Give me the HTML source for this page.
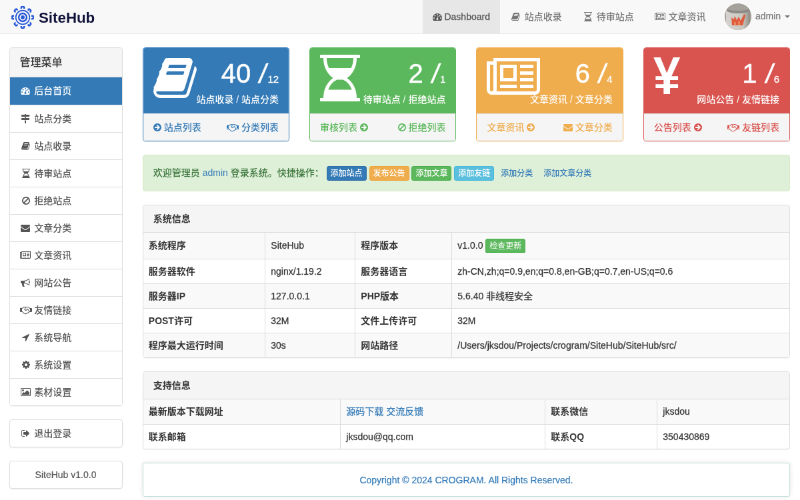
<!DOCTYPE html>
<html lang="zh-CN"><head><meta charset="utf-8"><title>SiteHub</title><style>
*{box-sizing:border-box}
html,body{margin:0;padding:0;background:#fff;overflow:hidden}
body{width:800px;height:500px;position:relative}
#pg{position:absolute;left:0;top:0;width:1200px;height:750px;transform:scale(0.666667);transform-origin:0 0;font-family:"Liberation Sans","Noto Sans CJK SC",sans-serif;font-size:14px;font-weight:500;line-height:20px;color:#333;overflow:hidden;will-change:transform}
a{color:#337ab7;text-decoration:none}
.fa{display:inline-block;height:1em;vertical-align:-0.143em;fill:currentColor;overflow:visible}
.fw{display:inline-block;width:1.2857em;text-align:center}
.navbar{position:absolute;left:0;top:0;width:1200px;height:51px;background:#f8f8f8;border-bottom:1px solid #e7e7e7}
.brand{position:absolute;left:15px;top:0;height:50px}
.brand svg{position:absolute;left:1.8px;top:8.8px;width:34px;height:34px}
.brand span{position:absolute;left:43px;top:0;line-height:54.5px;font-size:22.3px;font-weight:bold;color:#10133a;letter-spacing:0}
.nav{position:absolute;right:0;top:0;height:50px;display:flex;margin:0;padding:0;list-style:none}
.nav li{height:50px;padding:15px 15px;line-height:20px;color:#777;white-space:nowrap}
.nav li.act{background:#e7e7e7;color:#555;-webkit-text-stroke:0.25px currentColor}
.foot,.vs,.nav li.user{-webkit-text-stroke:0.2px currentColor}
.nav li.user{padding:5px 15px 5px 13.5px;}
.avatar{display:inline-block;width:40px;height:40px;border-radius:50%;vertical-align:middle;overflow:hidden;margin-right:2px}
.caret{display:inline-block;width:0;height:0;margin-left:2px;vertical-align:middle;border-top:4px solid;border-right:4px solid transparent;border-left:4px solid transparent}
.side{position:absolute;left:13.5px;top:71px;width:170px}
.main{position:absolute;left:213.8px;top:71px;width:971.2px}
.panel{background:#fff;border:1px solid #ddd;border-radius:4px;margin-bottom:20px;box-shadow:0 1px 1px rgba(0,0,0,.05)}
.ph{padding:10px 15px;background:#f5f5f5;border-bottom:1px solid #ddd;border-radius:3px 3px 0 0;color:#333}
.side .ph{font-size:16px;height:43.5px;padding:12px 15px;line-height:20px}
.lg{margin:0;padding:0;list-style:none}
.lg li{display:block;padding:10px 15px;height:41px;border-top:1px solid #ddd;color:#555;background:#fff;white-space:nowrap}
.lg li:first-child{border-top:0}
.lg li.act{background:#337ab7;color:#fff;border-color:#337ab7}
.lgb{border:1px solid #ddd;border-radius:4px;margin-bottom:20px;height:42px;padding:10px 15px;color:#555;background:#fff;box-shadow:0 1px 2px rgba(0,0,0,.075)}
.cards{display:flex;margin:0 -15px}
.cards .col{width:25%;padding:0 15px}
.card{border:1px solid;border-radius:4px;margin-bottom:20px;box-shadow:0 1px 1px rgba(0,0,0,.05);background:#fff}
.card .hd{height:98px;padding:10px 15px;color:#fff;position:relative;border-radius:3px 3px 0 0;border-bottom:1px solid}
.card .hd .ic{position:absolute;left:15px;top:10px;font-size:70px;line-height:70px;height:70px}
.card .hd .huge{position:absolute;right:15px;top:10px;font-size:40px;line-height:57px;white-space:nowrap}
.card .hd .huge small{font-size:15px;-webkit-text-stroke:0.3px #fff}
.card .hd .huge{-webkit-text-stroke:0.5px #fff}
.sl{display:inline-block;transform:skewX(-9deg);transform-origin:50% 50%;margin:0 1px 0 2px}
.card .hd .lbl{position:absolute;right:15px;top:67px;white-space:nowrap}
.card .ft{height:41px;padding:10px 15px;background:#f5f5f5;border-top:1px solid #ddd;border-radius:0 0 3px 3px;display:flex;justify-content:space-between;white-space:nowrap}
.yen{position:absolute;left:-1px;top:-3.5px;font-size:80px;line-height:70px;font-weight:bold;display:block;transform:scaleX(0.91);transform-origin:0 0;height:70px}
.c1{border-color:#337ab7}.c1 .hd{background:#337ab7;border-color:#337ab7}.c1 .ft{color:#337ab7}
.c2{border-color:#5cb85c}.c2 .hd{background:#5cb85c;border-color:#5cb85c}.c2 .ft{color:#5cb85c}
.c3{border-color:#f0ad4e}.c3 .hd{background:#f0ad4e;border-color:#f0ad4e}.c3 .ft{color:#f0ad4e}
.c4{border-color:#d9534f}.c4 .hd{background:#d9534f;border-color:#d9534f}.c4 .ft{color:#d9534f}
.alert{height:55px;padding:15px;border:1px solid #d6e9c6;border-radius:4px;background:#dff0d8;color:#3c763d;margin-bottom:20px;white-space:nowrap;line-height:23px}
.btn{display:inline-block;padding:1px 5px;font-size:12px;line-height:18px;border-radius:3px;border:1px solid transparent;color:#fff;vertical-align:middle}
.bp{background:#337ab7;border-color:#2e6da4}.bw{background:#f0ad4e;border-color:#eea236}.bs{background:#5cb85c;border-color:#4cae4c}.bi{background:#5bc0de;border-color:#46b8da}.bl{color:#337ab7}
table{width:100%;border-collapse:collapse;border-spacing:0;table-layout:fixed}
td{-webkit-text-stroke:0.25px currentColor;font-weight:400}
td,th{padding:8px;line-height:20px;height:37px;text-align:left;border:1px solid #ddd;vertical-align:top;white-space:nowrap;overflow:hidden}
tr>*:first-child{border-left:0}tr>*:last-child{border-right:0}
tr:last-child>*{border-bottom:0}
tr:first-child>*{border-top:0}
.st tr:nth-child(odd){background:#f9f9f9}
.st tr:first-child>*{height:38px;padding-top:8.5px}
.label{display:inline-block;padding:2.8px 5.6px 2.8px;font-size:10.5px;font-weight:bold;line-height:10.5px;color:#fff;background:#5cb85c;border-radius:3px;vertical-align:baseline;position:relative;top:-1px}
.foot{margin-top:20px;height:51px;padding:15px;border:1px solid #bfdeda;border-radius:3px;text-align:center;color:#337ab7;box-shadow:0 0 7px rgba(60,60,80,.13);background:#fff}
</style></head><body><div id="pg">
<div class="navbar"><div class="brand"><svg viewBox="0 0 100 100"><g fill="none" stroke="#2758d8" stroke-width="5" stroke-linecap="round"><circle cx="50" cy="50" r="30.5"/><circle cx="50" cy="50" r="17.5" stroke-width="7"/></g><circle cx="50" cy="50" r="8.5" fill="#2758d8"/><g fill="none" stroke="#2758d8" stroke-width="7" stroke-linecap="butt"><path transform="rotate(0 50 50)" d="M43.5 12 V7 a4 4 0 0 1 4 -4 h5 a4 4 0 0 1 4 4 V12"/><path transform="rotate(45 50 50)" d="M43.5 12 V7 a4 4 0 0 1 4 -4 h5 a4 4 0 0 1 4 4 V12"/><path transform="rotate(90 50 50)" d="M43.5 12 V7 a4 4 0 0 1 4 -4 h5 a4 4 0 0 1 4 4 V12"/><path transform="rotate(135 50 50)" d="M43.5 12 V7 a4 4 0 0 1 4 -4 h5 a4 4 0 0 1 4 4 V12"/><path transform="rotate(180 50 50)" d="M43.5 12 V7 a4 4 0 0 1 4 -4 h5 a4 4 0 0 1 4 4 V12"/><path transform="rotate(225 50 50)" d="M43.5 12 V7 a4 4 0 0 1 4 -4 h5 a4 4 0 0 1 4 4 V12"/><path transform="rotate(270 50 50)" d="M43.5 12 V7 a4 4 0 0 1 4 -4 h5 a4 4 0 0 1 4 4 V12"/><path transform="rotate(315 50 50)" d="M43.5 12 V7 a4 4 0 0 1 4 -4 h5 a4 4 0 0 1 4 4 V12"/></g></svg><span>SiteHub</span></div>
<ul class="nav"><li class="act"><svg class="fa " viewBox="0 0 1792 1792" style="width:1.0000em;"><path transform="translate(0,1536) scale(1,-1)" d="M384 384q0 53 -37.5 90.5t-90.5 37.5t-90.5 -37.5t-37.5 -90.5t37.5 -90.5t90.5 -37.5t90.5 37.5t37.5 90.5zM576 832q0 53 -37.5 90.5t-90.5 37.5t-90.5 -37.5t-37.5 -90.5t37.5 -90.5t90.5 -37.5t90.5 37.5t37.5 90.5zM1004 351l101 382q6 26 -7.5 48.5t-38.5 29.5 t-48 -6.5t-30 -39.5l-101 -382q-60 -5 -107 -43.5t-63 -98.5q-20 -77 20 -146t117 -89t146 20t89 117q16 60 -6 117t-72 91zM1664 384q0 53 -37.5 90.5t-90.5 37.5t-90.5 -37.5t-37.5 -90.5t37.5 -90.5t90.5 -37.5t90.5 37.5t37.5 90.5zM1024 1024q0 53 -37.5 90.5 t-90.5 37.5t-90.5 -37.5t-37.5 -90.5t37.5 -90.5t90.5 -37.5t90.5 37.5t37.5 90.5zM1472 832q0 53 -37.5 90.5t-90.5 37.5t-90.5 -37.5t-37.5 -90.5t37.5 -90.5t90.5 -37.5t90.5 37.5t37.5 90.5zM1792 384q0 -261 -141 -483q-19 -29 -54 -29h-1402q-35 0 -54 29 q-141 221 -141 483q0 182 71 348t191 286t286 191t348 71t348 -71t286 -191t191 -286t71 -348z"/></svg> Dashboard</li><li><span class="fw" style=""><svg class="fa " viewBox="0 0 1664 1792" style="width:0.9286em;"><path transform="translate(0,1536) scale(1,-1)" d="M1639 1058q40 -57 18 -129l-275 -906q-19 -64 -76.5 -107.5t-122.5 -43.5h-923q-77 0 -148.5 53.5t-99.5 131.5q-24 67 -2 127q0 4 3 27t4 37q1 8 -3 21.5t-3 19.5q2 11 8 21t16.5 23.5t16.5 23.5q23 38 45 91.5t30 91.5q3 10 0.5 30t-0.5 28q3 11 17 28t17 23 q21 36 42 92t25 90q1 9 -2.5 32t0.5 28q4 13 22 30.5t22 22.5q19 26 42.5 84.5t27.5 96.5q1 8 -3 25.5t-2 26.5q2 8 9 18t18 23t17 21q8 12 16.5 30.5t15 35t16 36t19.5 32t26.5 23.5t36 11.5t47.5 -5.5l-1 -3q38 9 51 9h761q74 0 114 -56t18 -130l-274 -906 q-36 -119 -71.5 -153.5t-128.5 -34.5h-869q-27 0 -38 -15q-11 -16 -1 -43q24 -70 144 -70h923q29 0 56 15.5t35 41.5l300 987q7 22 5 57q38 -15 59 -43zM575 1056q-4 -13 2 -22.5t20 -9.5h608q13 0 25.5 9.5t16.5 22.5l21 64q4 13 -2 22.5t-20 9.5h-608q-13 0 -25.5 -9.5 t-16.5 -22.5zM492 800q-4 -13 2 -22.5t20 -9.5h608q13 0 25.5 9.5t16.5 22.5l21 64q4 13 -2 22.5t-20 9.5h-608q-13 0 -25.5 -9.5t-16.5 -22.5z"/></svg></span> 站点收录</li><li><span class="fw" style=""><svg class="fa " viewBox="0 0 1536 1792" style="width:0.8571em;"><path transform="translate(0,1536) scale(1,-1)" d="M1408 1408q0 -261 -106.5 -461.5t-266.5 -306.5q160 -106 266.5 -306.5t106.5 -461.5h96q14 0 23 -9t9 -23v-64q0 -14 -9 -23t-23 -9h-1472q-14 0 -23 9t-9 23v64q0 14 9 23t23 9h96q0 261 106.5 461.5t266.5 306.5q-160 106 -266.5 306.5t-106.5 461.5h-96q-14 0 -23 9 t-9 23v64q0 14 9 23t23 9h1472q14 0 23 -9t9 -23v-64q0 -14 -9 -23t-23 -9h-96zM1280 1408h-1024q0 -206 85 -384h854q85 178 85 384zM1223 192q-54 141 -145.5 241.5t-194.5 142.5h-230q-103 -42 -194.5 -142.5t-145.5 -241.5h910z"/></svg></span> 待审站点</li><li><span class="fw" style=""><svg class="fa " viewBox="0 0 2048 1792" style="width:1.1429em;"><path transform="translate(0,1536) scale(1,-1)" d="M1024 1024h-384v-384h384v384zM1152 384v-128h-640v128h640zM1152 1152v-640h-640v640h640zM1792 384v-128h-512v128h512zM1792 640v-128h-512v128h512zM1792 896v-128h-512v128h512zM1792 1152v-128h-512v128h512zM256 192v960h-128v-960q0 -26 19 -45t45 -19t45 19 t19 45zM1920 192v1088h-1536v-1088q0 -33 -11 -64h1483q26 0 45 19t19 45zM2048 1408v-1216q0 -80 -56 -136t-136 -56h-1664q-80 0 -136 56t-56 136v1088h256v128h1792z"/></svg></span> 文章资讯</li><li class="user"><svg class="avatar" viewBox="0 0 40 40"><linearGradient id="ag" x1="0" y1="0" x2="1" y2="0"><stop offset="0" stop-color="#d6d3ce"/><stop offset="0.7" stop-color="#cbc8c2"/><stop offset="1" stop-color="#8f8b85"/></linearGradient><rect width="40" height="40" fill="#a39f99"/><path d="M2 10 h36 v30 h-36 z" fill="url(#ag)"/><ellipse cx="20" cy="9.5" rx="18" ry="5.5" fill="#8e8a85"/><ellipse cx="20" cy="7" rx="18" ry="4" fill="#a5a19b"/><path d="M11 33 L10 21 L13.5 24 L15 19 L18 25 L21 20 L24 26 L29 16 L31 18 L27 33 Z" fill="#e05a3c"/><path d="M14 33 v-5 h3 v5 z M20 33 v-6 h3 v6z" fill="#f0a070" opacity=".6"/></svg> admin <b class="caret"></b></li></ul></div>
<div class="side"><div class="panel"><div class="ph">管理菜单</div><ul class="lg"><li class="act"><span class="fw" style=""><svg class="fa " viewBox="0 0 1792 1792" style="width:1.0000em;"><path transform="translate(0,1536) scale(1,-1)" d="M384 384q0 53 -37.5 90.5t-90.5 37.5t-90.5 -37.5t-37.5 -90.5t37.5 -90.5t90.5 -37.5t90.5 37.5t37.5 90.5zM576 832q0 53 -37.5 90.5t-90.5 37.5t-90.5 -37.5t-37.5 -90.5t37.5 -90.5t90.5 -37.5t90.5 37.5t37.5 90.5zM1004 351l101 382q6 26 -7.5 48.5t-38.5 29.5 t-48 -6.5t-30 -39.5l-101 -382q-60 -5 -107 -43.5t-63 -98.5q-20 -77 20 -146t117 -89t146 20t89 117q16 60 -6 117t-72 91zM1664 384q0 53 -37.5 90.5t-90.5 37.5t-90.5 -37.5t-37.5 -90.5t37.5 -90.5t90.5 -37.5t90.5 37.5t37.5 90.5zM1024 1024q0 53 -37.5 90.5 t-90.5 37.5t-90.5 -37.5t-37.5 -90.5t37.5 -90.5t90.5 -37.5t90.5 37.5t37.5 90.5zM1472 832q0 53 -37.5 90.5t-90.5 37.5t-90.5 -37.5t-37.5 -90.5t37.5 -90.5t90.5 -37.5t90.5 37.5t37.5 90.5zM1792 384q0 -261 -141 -483q-19 -29 -54 -29h-1402q-35 0 -54 29 q-141 221 -141 483q0 182 71 348t191 286t286 191t348 71t348 -71t286 -191t191 -286t71 -348z"/></svg></span> 后台首页</li>
<li><span class="fw" style=""><svg class="fa " viewBox="0 0 1792 1792" style="width:1.0000em;"><path transform="translate(0,1536) scale(1,-1)" d="M1745 1239q10 -10 10 -23t-10 -23l-141 -141q-28 -28 -68 -28h-1344q-26 0 -45 19t-19 45v256q0 26 19 45t45 19h576v64q0 26 19 45t45 19h128q26 0 45 -19t19 -45v-64h512q40 0 68 -28zM768 320h256v-512q0 -26 -19 -45t-45 -19h-128q-26 0 -45 19t-19 45v512zM1600 768 q26 0 45 -19t19 -45v-256q0 -26 -19 -45t-45 -19h-1344q-40 0 -68 28l-141 141q-10 10 -10 23t10 23l141 141q28 28 68 28h512v192h256v-192h576z"/></svg></span> 站点分类</li>
<li><span class="fw" style=""><svg class="fa " viewBox="0 0 1664 1792" style="width:0.9286em;"><path transform="translate(0,1536) scale(1,-1)" d="M1639 1058q40 -57 18 -129l-275 -906q-19 -64 -76.5 -107.5t-122.5 -43.5h-923q-77 0 -148.5 53.5t-99.5 131.5q-24 67 -2 127q0 4 3 27t4 37q1 8 -3 21.5t-3 19.5q2 11 8 21t16.5 23.5t16.5 23.5q23 38 45 91.5t30 91.5q3 10 0.5 30t-0.5 28q3 11 17 28t17 23 q21 36 42 92t25 90q1 9 -2.5 32t0.5 28q4 13 22 30.5t22 22.5q19 26 42.5 84.5t27.5 96.5q1 8 -3 25.5t-2 26.5q2 8 9 18t18 23t17 21q8 12 16.5 30.5t15 35t16 36t19.5 32t26.5 23.5t36 11.5t47.5 -5.5l-1 -3q38 9 51 9h761q74 0 114 -56t18 -130l-274 -906 q-36 -119 -71.5 -153.5t-128.5 -34.5h-869q-27 0 -38 -15q-11 -16 -1 -43q24 -70 144 -70h923q29 0 56 15.5t35 41.5l300 987q7 22 5 57q38 -15 59 -43zM575 1056q-4 -13 2 -22.5t20 -9.5h608q13 0 25.5 9.5t16.5 22.5l21 64q4 13 -2 22.5t-20 9.5h-608q-13 0 -25.5 -9.5 t-16.5 -22.5zM492 800q-4 -13 2 -22.5t20 -9.5h608q13 0 25.5 9.5t16.5 22.5l21 64q4 13 -2 22.5t-20 9.5h-608q-13 0 -25.5 -9.5t-16.5 -22.5z"/></svg></span> 站点收录</li>
<li><span class="fw" style=""><svg class="fa " viewBox="0 0 1536 1792" style="width:0.8571em;"><path transform="translate(0,1536) scale(1,-1)" d="M1408 1408q0 -261 -106.5 -461.5t-266.5 -306.5q160 -106 266.5 -306.5t106.5 -461.5h96q14 0 23 -9t9 -23v-64q0 -14 -9 -23t-23 -9h-1472q-14 0 -23 9t-9 23v64q0 14 9 23t23 9h96q0 261 106.5 461.5t266.5 306.5q-160 106 -266.5 306.5t-106.5 461.5h-96q-14 0 -23 9 t-9 23v64q0 14 9 23t23 9h1472q14 0 23 -9t9 -23v-64q0 -14 -9 -23t-23 -9h-96zM1280 1408h-1024q0 -206 85 -384h854q85 178 85 384zM1223 192q-54 141 -145.5 241.5t-194.5 142.5h-230q-103 -42 -194.5 -142.5t-145.5 -241.5h910z"/></svg></span> 待审站点</li>
<li><span class="fw" style=""><svg class="fa " viewBox="0 0 1536 1792" style="width:0.8571em;"><path transform="translate(0,1536) scale(1,-1)" d="M1312 643q0 161 -87 295l-754 -753q137 -89 297 -89q111 0 211.5 43.5t173.5 116.5t116 174.5t43 212.5zM313 344l755 754q-135 91 -300 91q-148 0 -273 -73t-198 -199t-73 -274q0 -162 89 -299zM1536 643q0 -157 -61 -300t-163.5 -246t-245 -164t-298.5 -61t-298.5 61 t-245 164t-163.5 246t-61 300t61 299.5t163.5 245.5t245 164t298.5 61t298.5 -61t245 -164t163.5 -245.5t61 -299.5z"/></svg></span> 拒绝站点</li>
<li><span class="fw" style=""><svg class="fa " viewBox="0 0 1792 1792" style="width:1.0000em;"><path transform="translate(0,1536) scale(1,-1)" d="M1792 826v-794q0 -66 -47 -113t-113 -47h-1472q-66 0 -113 47t-47 113v794q44 -49 101 -87q362 -246 497 -345q57 -42 92.5 -65.5t94.5 -48t110 -24.5h1h1q51 0 110 24.5t94.5 48t92.5 65.5q170 123 498 345q57 39 100 87zM1792 1120q0 -79 -49 -151t-122 -123 q-376 -261 -468 -325q-10 -7 -42.5 -30.5t-54 -38t-52 -32.5t-57.5 -27t-50 -9h-1h-1q-23 0 -50 9t-57.5 27t-52 32.5t-54 38t-42.5 30.5q-91 64 -262 182.5t-205 142.5q-62 42 -117 115.5t-55 136.5q0 78 41.5 130t118.5 52h1472q65 0 112.5 -47t47.5 -113z"/></svg></span> 文章分类</li>
<li><span class="fw" style=""><svg class="fa " viewBox="0 0 2048 1792" style="width:1.1429em;"><path transform="translate(0,1536) scale(1,-1)" d="M1024 1024h-384v-384h384v384zM1152 384v-128h-640v128h640zM1152 1152v-640h-640v640h640zM1792 384v-128h-512v128h512zM1792 640v-128h-512v128h512zM1792 896v-128h-512v128h512zM1792 1152v-128h-512v128h512zM256 192v960h-128v-960q0 -26 19 -45t45 -19t45 19 t19 45zM1920 192v1088h-1536v-1088q0 -33 -11 -64h1483q26 0 45 19t19 45zM2048 1408v-1216q0 -80 -56 -136t-136 -56h-1664q-80 0 -136 56t-56 136v1088h256v128h1792z"/></svg></span> 文章资讯</li>
<li><span class="fw" style=""><svg class="fa " viewBox="0 0 1792 1792" style="width:1.0000em;"><path transform="translate(0,1536) scale(1,-1)" d="M1664 896q53 0 90.5 -37.5t37.5 -90.5t-37.5 -90.5t-90.5 -37.5v-384q0 -52 -38 -90t-90 -38q-417 347 -812 380q-58 -19 -91 -66t-31 -100.5t40 -92.5q-20 -33 -23 -65.5t6 -58t33.5 -55t48 -50t61.5 -50.5q-29 -58 -111.5 -83t-168.5 -11.5t-132 55.5q-7 23 -29.5 87.5 t-32 94.5t-23 89t-15 101t3.5 98.5t22 110.5h-122q-66 0 -113 47t-47 113v192q0 66 47 113t113 47h480q435 0 896 384q52 0 90 -38t38 -90v-384zM1536 292v954q-394 -302 -768 -343v-270q377 -42 768 -341z"/></svg></span> 网站公告</li>
<li><span class="fw" style=""><svg class="fa " viewBox="0 0 2304 1792" style="width:1.2857em;"><path transform="translate(0,1536) scale(1,-1)" d="M192 384q40 0 56 32t0 64t-56 32t-56 -32t0 -64t56 -32zM1665 442q-10 13 -38.5 50t-41.5 54t-38 49t-42.5 53t-40.5 47t-45 49l-125 -140q-83 -94 -208.5 -92t-205.5 98q-57 69 -56.5 158t58.5 157l177 206q-22 11 -51 16.5t-47.5 6t-56.5 -0.5t-49 -1q-92 0 -158 -66 l-158 -158h-155v-544q5 0 21 0.5t22 0t19.5 -2t20.5 -4.5t17.5 -8.5t18.5 -13.5l297 -292q115 -111 227 -111q78 0 125 47q57 -20 112.5 8t72.5 85q74 -6 127 44q20 18 36 45.5t14 50.5q10 -10 43 -10q43 0 77 21t49.5 53t12 71.5t-30.5 73.5zM1824 384h96v512h-93l-157 180 q-66 76 -169 76h-167q-89 0 -146 -67l-209 -243q-28 -33 -28 -75t27 -75q43 -51 110 -52t111 49l193 218q25 23 53.5 21.5t47 -27t8.5 -56.5q16 -19 56 -63t60 -68q29 -36 82.5 -105.5t64.5 -84.5q52 -66 60 -140zM2112 384q40 0 56 32t0 64t-56 32t-56 -32t0 -64t56 -32z M2304 960v-640q0 -26 -19 -45t-45 -19h-434q-27 -65 -82 -106.5t-125 -51.5q-33 -48 -80.5 -81.5t-102.5 -45.5q-42 -53 -104.5 -81.5t-128.5 -24.5q-60 -34 -126 -39.5t-127.5 14t-117 53.5t-103.5 81l-287 282h-358q-26 0 -45 19t-19 45v672q0 26 19 45t45 19h421 q14 14 47 48t47.5 48t44 40t50.5 37.5t51 25.5t62 19.5t68 5.5h117q99 0 181 -56q82 56 181 56h167q35 0 67 -6t56.5 -14.5t51.5 -26.5t44.5 -31t43 -39.5t39 -42t41 -48t41.5 -48.5h355q26 0 45 -19t19 -45z"/></svg></span> 友情链接</li>
<li><span class="fw" style=""><svg class="fa " viewBox="0 0 1408 1792" style="width:0.7857em;"><path transform="translate(0,1536) scale(1,-1)" d="M1401 1187l-640 -1280q-17 -35 -57 -35q-5 0 -15 2q-22 5 -35.5 22.5t-13.5 39.5v576h-576q-22 0 -39.5 13.5t-22.5 35.5t4 42t29 30l1280 640q13 7 29 7q27 0 45 -19q15 -14 18.5 -34.5t-6.5 -39.5z"/></svg></span> 系统导航</li>
<li><span class="fw" style=""><svg class="fa " viewBox="0 0 1536 1792" style="width:0.8571em;"><path transform="translate(0,1536) scale(1,-1)" d="M1024 640q0 106 -75 181t-181 75t-181 -75t-75 -181t75 -181t181 -75t181 75t75 181zM1536 749v-222q0 -12 -8 -23t-20 -13l-185 -28q-19 -54 -39 -91q35 -50 107 -138q10 -12 10 -25t-9 -23q-27 -37 -99 -108t-94 -71q-12 0 -26 9l-138 108q-44 -23 -91 -38 q-16 -136 -29 -186q-7 -28 -36 -28h-222q-14 0 -24.5 8.5t-11.5 21.5l-28 184q-49 16 -90 37l-141 -107q-10 -9 -25 -9q-14 0 -25 11q-126 114 -165 168q-7 10 -7 23q0 12 8 23q15 21 51 66.5t54 70.5q-27 50 -41 99l-183 27q-13 2 -21 12.5t-8 23.5v222q0 12 8 23t19 13 l186 28q14 46 39 92q-40 57 -107 138q-10 12 -10 24q0 10 9 23q26 36 98.5 107.5t94.5 71.5q13 0 26 -10l138 -107q44 23 91 38q16 136 29 186q7 28 36 28h222q14 0 24.5 -8.5t11.5 -21.5l28 -184q49 -16 90 -37l142 107q9 9 24 9q13 0 25 -10q129 -119 165 -170q7 -8 7 -22 q0 -12 -8 -23q-15 -21 -51 -66.5t-54 -70.5q26 -50 41 -98l183 -28q13 -2 21 -12.5t8 -23.5z"/></svg></span> 系统设置</li>
<li><span class="fw" style=""><svg class="fa " viewBox="0 0 1920 1792" style="width:1.0714em;"><path transform="translate(0,1536) scale(1,-1)" d="M640 960q0 -80 -56 -136t-136 -56t-136 56t-56 136t56 136t136 56t136 -56t56 -136zM1664 576v-448h-1408v192l320 320l160 -160l512 512zM1760 1280h-1600q-13 0 -22.5 -9.5t-9.5 -22.5v-1216q0 -13 9.5 -22.5t22.5 -9.5h1600q13 0 22.5 9.5t9.5 22.5v1216 q0 13 -9.5 22.5t-22.5 9.5zM1920 1248v-1216q0 -66 -47 -113t-113 -47h-1600q-66 0 -113 47t-47 113v1216q0 66 47 113t113 47h1600q66 0 113 -47t47 -113z"/></svg></span> 素材设置</li>
</ul></div>
<div class="lgb"><span class="fw" style=""><svg class="fa " viewBox="0 0 1664 1792" style="width:0.9286em;"><path transform="translate(0,1536) scale(1,-1)" d="M640 96q0 -4 1 -20t0.5 -26.5t-3 -23.5t-10 -19.5t-20.5 -6.5h-320q-119 0 -203.5 84.5t-84.5 203.5v704q0 119 84.5 203.5t203.5 84.5h320q13 0 22.5 -9.5t9.5 -22.5q0 -4 1 -20t0.5 -26.5t-3 -23.5t-10 -19.5t-20.5 -6.5h-320q-66 0 -113 -47t-47 -113v-704 q0 -66 47 -113t113 -47h288h11h13t11.5 -1t11.5 -3t8 -5.5t7 -9t2 -13.5zM1568 640q0 -26 -19 -45l-544 -544q-19 -19 -45 -19t-45 19t-19 45v288h-448q-26 0 -45 19t-19 45v384q0 26 19 45t45 19h448v288q0 26 19 45t45 19t45 -19l544 -544q19 -19 19 -45z"/></svg></span> 退出登录</div>
<div class="lgb vs" style="text-align:center">SiteHub v1.0.0</div></div>
<div class="main"><div class="cards"><div class="col"><div class="card c1"><div class="hd"><div class="ic"><svg class="fa " viewBox="0 0 1664 1792" style="width:0.9286em;"><path transform="translate(0,1536) scale(1,-1)" d="M1639 1058q40 -57 18 -129l-275 -906q-19 -64 -76.5 -107.5t-122.5 -43.5h-923q-77 0 -148.5 53.5t-99.5 131.5q-24 67 -2 127q0 4 3 27t4 37q1 8 -3 21.5t-3 19.5q2 11 8 21t16.5 23.5t16.5 23.5q23 38 45 91.5t30 91.5q3 10 0.5 30t-0.5 28q3 11 17 28t17 23 q21 36 42 92t25 90q1 9 -2.5 32t0.5 28q4 13 22 30.5t22 22.5q19 26 42.5 84.5t27.5 96.5q1 8 -3 25.5t-2 26.5q2 8 9 18t18 23t17 21q8 12 16.5 30.5t15 35t16 36t19.5 32t26.5 23.5t36 11.5t47.5 -5.5l-1 -3q38 9 51 9h761q74 0 114 -56t18 -130l-274 -906 q-36 -119 -71.5 -153.5t-128.5 -34.5h-869q-27 0 -38 -15q-11 -16 -1 -43q24 -70 144 -70h923q29 0 56 15.5t35 41.5l300 987q7 22 5 57q38 -15 59 -43zM575 1056q-4 -13 2 -22.5t20 -9.5h608q13 0 25.5 9.5t16.5 22.5l21 64q4 13 -2 22.5t-20 9.5h-608q-13 0 -25.5 -9.5 t-16.5 -22.5zM492 800q-4 -13 2 -22.5t20 -9.5h608q13 0 25.5 9.5t16.5 22.5l21 64q4 13 -2 22.5t-20 9.5h-608q-13 0 -25.5 -9.5t-16.5 -22.5z"/></svg></div><div class="huge">40 <span class="sl">/</span><small>12</small></div><div class="lbl">站点收录 / 站点分类</div></div><div class="ft"><span><svg class="fa " viewBox="0 0 1536 1792" style="width:0.8571em;"><path transform="translate(0,1536) scale(1,-1)" d="M1285 640q0 27 -18 45l-91 91l-362 362q-18 18 -45 18t-45 -18l-91 -91q-18 -18 -18 -45t18 -45l189 -189h-502q-26 0 -45 -19t-19 -45v-128q0 -26 19 -45t45 -19h502l-189 -189q-19 -19 -19 -45t19 -45l91 -91q18 -18 45 -18t45 18l362 362l91 91q18 18 18 45zM1536 640 q0 -209 -103 -385.5t-279.5 -279.5t-385.5 -103t-385.5 103t-279.5 279.5t-103 385.5t103 385.5t279.5 279.5t385.5 103t385.5 -103t279.5 -279.5t103 -385.5z"/></svg> 站点列表</span><span><svg class="fa " viewBox="0 0 2304 1792" style="width:1.2857em;"><path transform="translate(0,1536) scale(1,-1)" d="M192 384q40 0 56 32t0 64t-56 32t-56 -32t0 -64t56 -32zM1665 442q-10 13 -38.5 50t-41.5 54t-38 49t-42.5 53t-40.5 47t-45 49l-125 -140q-83 -94 -208.5 -92t-205.5 98q-57 69 -56.5 158t58.5 157l177 206q-22 11 -51 16.5t-47.5 6t-56.5 -0.5t-49 -1q-92 0 -158 -66 l-158 -158h-155v-544q5 0 21 0.5t22 0t19.5 -2t20.5 -4.5t17.5 -8.5t18.5 -13.5l297 -292q115 -111 227 -111q78 0 125 47q57 -20 112.5 8t72.5 85q74 -6 127 44q20 18 36 45.5t14 50.5q10 -10 43 -10q43 0 77 21t49.5 53t12 71.5t-30.5 73.5zM1824 384h96v512h-93l-157 180 q-66 76 -169 76h-167q-89 0 -146 -67l-209 -243q-28 -33 -28 -75t27 -75q43 -51 110 -52t111 49l193 218q25 23 53.5 21.5t47 -27t8.5 -56.5q16 -19 56 -63t60 -68q29 -36 82.5 -105.5t64.5 -84.5q52 -66 60 -140zM2112 384q40 0 56 32t0 64t-56 32t-56 -32t0 -64t56 -32z M2304 960v-640q0 -26 -19 -45t-45 -19h-434q-27 -65 -82 -106.5t-125 -51.5q-33 -48 -80.5 -81.5t-102.5 -45.5q-42 -53 -104.5 -81.5t-128.5 -24.5q-60 -34 -126 -39.5t-127.5 14t-117 53.5t-103.5 81l-287 282h-358q-26 0 -45 19t-19 45v672q0 26 19 45t45 19h421 q14 14 47 48t47.5 48t44 40t50.5 37.5t51 25.5t62 19.5t68 5.5h117q99 0 181 -56q82 56 181 56h167q35 0 67 -6t56.5 -14.5t51.5 -26.5t44.5 -31t43 -39.5t39 -42t41 -48t41.5 -48.5h355q26 0 45 -19t19 -45z"/></svg> 分类列表</span></div></div></div>
<div class="col"><div class="card c2"><div class="hd"><div class="ic"><svg class="fa " viewBox="0 0 1536 1792" style="width:0.8571em;"><path transform="translate(0,1536) scale(1,-1)" d="M1408 1408q0 -261 -106.5 -461.5t-266.5 -306.5q160 -106 266.5 -306.5t106.5 -461.5h96q14 0 23 -9t9 -23v-64q0 -14 -9 -23t-23 -9h-1472q-14 0 -23 9t-9 23v64q0 14 9 23t23 9h96q0 261 106.5 461.5t266.5 306.5q-160 106 -266.5 306.5t-106.5 461.5h-96q-14 0 -23 9 t-9 23v64q0 14 9 23t23 9h1472q14 0 23 -9t9 -23v-64q0 -14 -9 -23t-23 -9h-96zM1280 1408h-1024q0 -206 85 -384h854q85 178 85 384zM1223 192q-54 141 -145.5 241.5t-194.5 142.5h-230q-103 -42 -194.5 -142.5t-145.5 -241.5h910z"/></svg></div><div class="huge">2 <span class="sl">/</span><small>1</small></div><div class="lbl">待审站点 / 拒绝站点</div></div><div class="ft"><span>审核列表 <svg class="fa " viewBox="0 0 1536 1792" style="width:0.8571em;"><path transform="translate(0,1536) scale(1,-1)" d="M1285 640q0 27 -18 45l-91 91l-362 362q-18 18 -45 18t-45 -18l-91 -91q-18 -18 -18 -45t18 -45l189 -189h-502q-26 0 -45 -19t-19 -45v-128q0 -26 19 -45t45 -19h502l-189 -189q-19 -19 -19 -45t19 -45l91 -91q18 -18 45 -18t45 18l362 362l91 91q18 18 18 45zM1536 640 q0 -209 -103 -385.5t-279.5 -279.5t-385.5 -103t-385.5 103t-279.5 279.5t-103 385.5t103 385.5t279.5 279.5t385.5 103t385.5 -103t279.5 -279.5t103 -385.5z"/></svg></span><span><svg class="fa " viewBox="0 0 1536 1792" style="width:0.8571em;"><path transform="translate(0,1536) scale(1,-1)" d="M1312 643q0 161 -87 295l-754 -753q137 -89 297 -89q111 0 211.5 43.5t173.5 116.5t116 174.5t43 212.5zM313 344l755 754q-135 91 -300 91q-148 0 -273 -73t-198 -199t-73 -274q0 -162 89 -299zM1536 643q0 -157 -61 -300t-163.5 -246t-245 -164t-298.5 -61t-298.5 61 t-245 164t-163.5 246t-61 300t61 299.5t163.5 245.5t245 164t298.5 61t298.5 -61t245 -164t163.5 -245.5t61 -299.5z"/></svg> 拒绝列表</span></div></div></div>
<div class="col"><div class="card c3"><div class="hd"><div class="ic"><svg class="fa " viewBox="0 0 2048 1792" style="width:1.1429em;"><path transform="translate(0,1536) scale(1,-1)" d="M1024 1024h-384v-384h384v384zM1152 384v-128h-640v128h640zM1152 1152v-640h-640v640h640zM1792 384v-128h-512v128h512zM1792 640v-128h-512v128h512zM1792 896v-128h-512v128h512zM1792 1152v-128h-512v128h512zM256 192v960h-128v-960q0 -26 19 -45t45 -19t45 19 t19 45zM1920 192v1088h-1536v-1088q0 -33 -11 -64h1483q26 0 45 19t19 45zM2048 1408v-1216q0 -80 -56 -136t-136 -56h-1664q-80 0 -136 56t-56 136v1088h256v128h1792z"/></svg></div><div class="huge">6 <span class="sl">/</span><small>4</small></div><div class="lbl">文章资讯 / 文章分类</div></div><div class="ft"><span>文章资讯 <svg class="fa " viewBox="0 0 1536 1792" style="width:0.8571em;"><path transform="translate(0,1536) scale(1,-1)" d="M1285 640q0 27 -18 45l-91 91l-362 362q-18 18 -45 18t-45 -18l-91 -91q-18 -18 -18 -45t18 -45l189 -189h-502q-26 0 -45 -19t-19 -45v-128q0 -26 19 -45t45 -19h502l-189 -189q-19 -19 -19 -45t19 -45l91 -91q18 -18 45 -18t45 18l362 362l91 91q18 18 18 45zM1536 640 q0 -209 -103 -385.5t-279.5 -279.5t-385.5 -103t-385.5 103t-279.5 279.5t-103 385.5t103 385.5t279.5 279.5t385.5 103t385.5 -103t279.5 -279.5t103 -385.5z"/></svg></span><span><svg class="fa " viewBox="0 0 1792 1792" style="width:1.0000em;"><path transform="translate(0,1536) scale(1,-1)" d="M1792 826v-794q0 -66 -47 -113t-113 -47h-1472q-66 0 -113 47t-47 113v794q44 -49 101 -87q362 -246 497 -345q57 -42 92.5 -65.5t94.5 -48t110 -24.5h1h1q51 0 110 24.5t94.5 48t92.5 65.5q170 123 498 345q57 39 100 87zM1792 1120q0 -79 -49 -151t-122 -123 q-376 -261 -468 -325q-10 -7 -42.5 -30.5t-54 -38t-52 -32.5t-57.5 -27t-50 -9h-1h-1q-23 0 -50 9t-57.5 27t-52 32.5t-54 38t-42.5 30.5q-91 64 -262 182.5t-205 142.5q-62 42 -117 115.5t-55 136.5q0 78 41.5 130t118.5 52h1472q65 0 112.5 -47t47.5 -113z"/></svg> 文章分类</span></div></div></div>
<div class="col"><div class="card c4"><div class="hd"><div class="ic"><span class="yen">¥</span></div><div class="huge">1 <span class="sl">/</span><small>6</small></div><div class="lbl">网站公告 / 友情链接</div></div><div class="ft"><span>公告列表 <svg class="fa " viewBox="0 0 1536 1792" style="width:0.8571em;"><path transform="translate(0,1536) scale(1,-1)" d="M1285 640q0 27 -18 45l-91 91l-362 362q-18 18 -45 18t-45 -18l-91 -91q-18 -18 -18 -45t18 -45l189 -189h-502q-26 0 -45 -19t-19 -45v-128q0 -26 19 -45t45 -19h502l-189 -189q-19 -19 -19 -45t19 -45l91 -91q18 -18 45 -18t45 18l362 362l91 91q18 18 18 45zM1536 640 q0 -209 -103 -385.5t-279.5 -279.5t-385.5 -103t-385.5 103t-279.5 279.5t-103 385.5t103 385.5t279.5 279.5t385.5 103t385.5 -103t279.5 -279.5t103 -385.5z"/></svg></span><span><svg class="fa " viewBox="0 0 2304 1792" style="width:1.2857em;"><path transform="translate(0,1536) scale(1,-1)" d="M192 384q40 0 56 32t0 64t-56 32t-56 -32t0 -64t56 -32zM1665 442q-10 13 -38.5 50t-41.5 54t-38 49t-42.5 53t-40.5 47t-45 49l-125 -140q-83 -94 -208.5 -92t-205.5 98q-57 69 -56.5 158t58.5 157l177 206q-22 11 -51 16.5t-47.5 6t-56.5 -0.5t-49 -1q-92 0 -158 -66 l-158 -158h-155v-544q5 0 21 0.5t22 0t19.5 -2t20.5 -4.5t17.5 -8.5t18.5 -13.5l297 -292q115 -111 227 -111q78 0 125 47q57 -20 112.5 8t72.5 85q74 -6 127 44q20 18 36 45.5t14 50.5q10 -10 43 -10q43 0 77 21t49.5 53t12 71.5t-30.5 73.5zM1824 384h96v512h-93l-157 180 q-66 76 -169 76h-167q-89 0 -146 -67l-209 -243q-28 -33 -28 -75t27 -75q43 -51 110 -52t111 49l193 218q25 23 53.5 21.5t47 -27t8.5 -56.5q16 -19 56 -63t60 -68q29 -36 82.5 -105.5t64.5 -84.5q52 -66 60 -140zM2112 384q40 0 56 32t0 64t-56 32t-56 -32t0 -64t56 -32z M2304 960v-640q0 -26 -19 -45t-45 -19h-434q-27 -65 -82 -106.5t-125 -51.5q-33 -48 -80.5 -81.5t-102.5 -45.5q-42 -53 -104.5 -81.5t-128.5 -24.5q-60 -34 -126 -39.5t-127.5 14t-117 53.5t-103.5 81l-287 282h-358q-26 0 -45 19t-19 45v672q0 26 19 45t45 19h421 q14 14 47 48t47.5 48t44 40t50.5 37.5t51 25.5t62 19.5t68 5.5h117q99 0 181 -56q82 56 181 56h167q35 0 67 -6t56.5 -14.5t51.5 -26.5t44.5 -31t43 -39.5t39 -42t41 -48t41.5 -48.5h355q26 0 45 -19t19 -45z"/></svg> 友链列表</span></div></div></div>
</div>
<div class="alert">欢迎管理员 <a>admin</a> 登录系统。快捷操作： <span class="btn bp">添加站点</span> <span class="btn bw">发布公告</span> <span class="btn bs">添加文章</span> <span class="btn bi">添加友链</span> <span class="btn bl">添加分类</span> <span class="btn bl">添加文章分类</span></div>
<div class="panel"><div class="ph"><b>系统信息</b></div><table class="st"><colgroup><col style="width:183px"><col style="width:135px"><col style="width:145px"><col></colgroup><tr><th>系统程序</th><td>SiteHub</td><th>程序版本</th><td>v1.0.0 <span class="btn bs" style="-webkit-text-stroke:0">检查更新</span></td></tr>
<tr><th>服务器软件</th><td>nginx/1.19.2</td><th>服务器语言</th><td>zh-CN,zh;q=0.9,en;q=0.8,en-GB;q=0.7,en-US;q=0.6</td></tr>
<tr><th>服务器IP</th><td>127.0.0.1</td><th>PHP版本</th><td>5.6.40 非线程安全</td></tr>
<tr><th>POST许可</th><td>32M</td><th>文件上传许可</th><td>32M</td></tr>
<tr><th>程序最大运行时间</th><td>30s</td><th>网站路径</th><td>/Users/jksdou/Projects/crogram/SiteHub/SiteHub/src/</td></tr>
</table></div>
<div class="panel"><div class="ph"><b>支持信息</b></div><table class="st2"><colgroup><col style="width:296px"><col style="width:307px"><col style="width:168px"><col></colgroup><tr style="background:#f9f9f9"><th>最新版本下载网址</th><td><a>源码下载</a> <a>交流反馈</a></td><th>联系微信</th><td>jksdou</td></tr>
<tr><th>联系邮箱</th><td>jksdou@qq.com</td><th>联系QQ</th><td>350430869</td></tr></table></div>
<div class="foot">Copyright © 2024 CROGRAM. All Rights Reserved.</div>
</div></div></body></html>
